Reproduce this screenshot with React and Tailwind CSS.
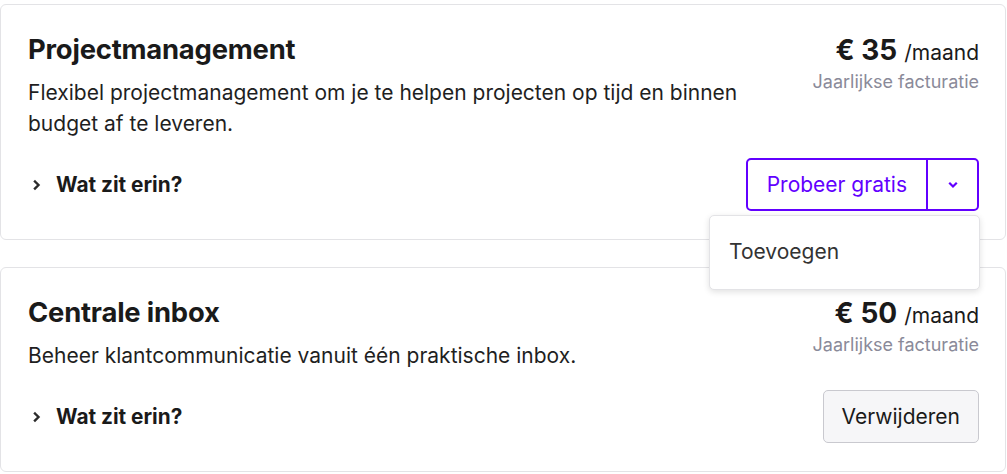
import React from "react";

const font = { fontFamily: "Inter, 'Noto Sans', sans-serif" };

function ChevronRight() {
  return (
    <svg width="10" height="12" viewBox="0 0 10 12" className="shrink-0">
      <path d="M3 2.5 L6.5 6 L3 9.5" fill="none" stroke="#2b2b2b" strokeWidth="2.4" strokeLinecap="square" strokeLinejoin="miter" />
    </svg>
  );
}

function ChevronDown() {
  return (
    <svg width="12" height="10" viewBox="0 0 12 10">
      <path d="M3 3.5 L6 6.5 L9 3.5" fill="none" stroke="#6200ff" strokeWidth="2.2" strokeLinecap="square" />
    </svg>
  );
}

function Card({ title, desc, price, action }) {
  return (
    <div className="w-[1006px] rounded-[6px] border border-[#e3e3e6] bg-white pl-[27px] pr-[26px] pt-[27px] pb-[28px]">
      <div className="flex justify-between">
        <div className="w-[740px]">
          <h2 className="text-[27.4px] font-bold leading-[34px] text-[#1a1a1a] tracking-[-0.2px]">{title}</h2>
          <p className="mt-[11px] text-[21px] leading-[31px] text-[#1f1f1f]">{desc}</p>
        </div>
        <div className="flex flex-col items-end">
          <div className="flex items-baseline gap-[7px] mt-[1px]">
            <span className="text-[28px] font-bold leading-[34px] text-[#1a1a1a]">€ {price}</span>
            <span className="text-[21px] text-[#1a1a1a]">/maand</span>
          </div>
          <div className="mt-[2px] text-[18px] leading-[22px] text-[#8a8a99]">Jaarlijkse facturatie</div>
        </div>
      </div>
      <div className="mt-[19px] flex items-center justify-between">
        <div className="flex items-center gap-[14px] pl-[4px]">
          <ChevronRight />
          <span className="text-[20.8px] font-bold text-[#1a1a1a]">Wat zit erin?</span>
        </div>
        {action}
      </div>
    </div>
  );
}

export default function App() {
  return (
    <div style={font} className="relative bg-white w-[1007px] h-[474px] pt-[4px]">
      <Card
        title="Projectmanagement"
        desc="Flexibel projectmanagement om je te helpen projecten op tijd en binnen budget af te leveren."
        price="35"
        action={
          <div className="relative">
            <div className="flex h-[53px] rounded-[5px] border-2 border-[#6200ff]">
              <button className="px-[19px] text-[21px] text-[#6200ff]">Probeer gratis</button>
              <div className="w-[2px] bg-[#6200ff]" />
              <button className="flex w-[49px] items-center justify-center">
                <ChevronDown />
              </button>
            </div>
            <div className="absolute right-[-1px] top-[57px] z-10 w-[271px] rounded-[5px] border border-[#e3e3e6] bg-white pt-[22px] pb-[23px] pl-[19px] shadow-[0_2px_6px_rgba(0,0,0,0.12)]">
              <span className="text-[21px] leading-[28px] text-[#333]">Toevoegen</span>
            </div>
          </div>
        }
      />
      <div className="h-[27px]" />
      <Card
        title="Centrale inbox"
        desc="Beheer klantcommunicatie vanuit één praktische inbox."
        price="50"
        action={
          <button className="h-[53px] rounded-[5px] border border-[#c9c9cf] bg-[#f6f6f8] px-[18px] text-[21px] text-[#1a1a1a]">
            Verwijderen
          </button>
        }
      />
    </div>
  );
}
